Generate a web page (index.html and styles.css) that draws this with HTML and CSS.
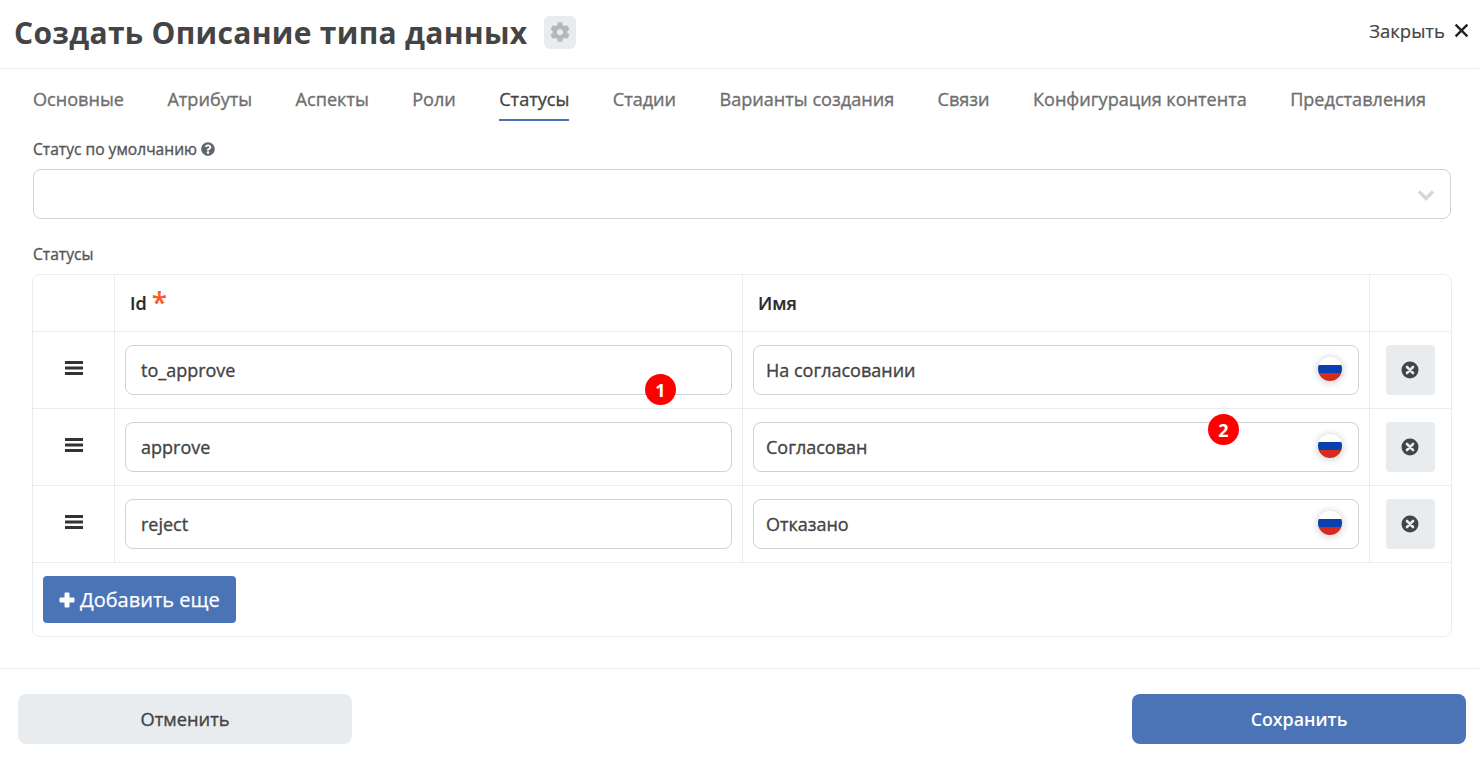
FILE: index.html
```html
<!DOCTYPE html>
<html lang="ru">
<head>
<meta charset="utf-8">
<title>Создать Описание типа данных</title>
<link rel="stylesheet" href="styles.css">
</head>
<body>
<div class="page">
  <header class="header">
    <div class="title-wrap">
      <h1 class="title">Создать Описание типа данных</h1>
      <span class="gear-btn">
        <svg class="gear" viewBox="0 0 512 512"><path fill="#b4b8ba" d="M487.4 315.7l-42.6-24.6c4.300-23.200 4.300-47 0-70.200l42.600-24.600c4.900-2.800 7.100-8.600 5.500-14-11.100-35.600-30-67.800-54.700-94.600-3.800-4.100-10-5.100-14.800-2.300L380.800 110c-17.900-15.400-38.500-27.300-60.800-35.100V25.800c0-5.600-3.900-10.500-9.400-11.700-36.700-8.200-74.300-7.800-109.200 0-5.500 1.200-9.400 6.100-9.400 11.700V75c-22.200 7.900-42.800 19.800-60.800 35.100L88.700 85.500c-4.900-2.800-11-1.900-14.800 2.300-24.700 26.700-43.600 58.900-54.700 94.600-1.700 5.400.6 11.200 5.500 14L67.300 221c-4.300 23.200-4.300 47 0 70.200l-42.600 24.600c-4.900 2.800-7.100 8.600-5.500 14 11.100 35.600 30 67.800 54.700 94.600 3.800 4.100 10 5.100 14.800 2.300l42.600-24.600c17.900 15.400 38.500 27.300 60.800 35.100v49.200c0 5.600 3.900 10.500 9.400 11.700 36.700 8.200 74.300 7.800 109.200 0 5.500-1.200 9.400-6.100 9.400-11.700v-49.200c22.200-7.900 42.800-19.800 60.800-35.100l42.600 24.600c4.900 2.800 11 1.900 14.800-2.300 24.700-26.700 43.600-58.900 54.700-94.600 1.500-5.500-.7-11.300-5.600-14.100zM256 336c-44.100 0-80-35.900-80-80s35.900-80 80-80 80 35.900 80 80-35.900 80-80 80z"/></svg>
      </span>
    </div>
    <div class="close">
      <span>Закрыть</span>
      <svg class="close-icon" viewBox="0 0 14 14"><path d="M1.500 1.500l11 11M12.500 1.500l-11 11" stroke="#222" stroke-width="2.200" fill="none"/></svg>
    </div>
  </header>

  <nav class="tabs">
    <span class="tab">Основные</span>
    <span class="tab">Атрибуты</span>
    <span class="tab">Аспекты</span>
    <span class="tab">Роли</span>
    <span class="tab tab-active">Статусы</span>
    <span class="tab">Стадии</span>
    <span class="tab">Варианты создания</span>
    <span class="tab">Связи</span>
    <span class="tab">Конфигурация контента</span>
    <span class="tab">Представления</span>
  </nav>

  <main class="content">
    <div class="label label-default">Статус по умолчанию
      <svg class="help" viewBox="0 0 512 512"><path fill="#5f666c" d="M504 256c0 137-111 248-248 248S8 393 8 256 119 8 256 8s248 111 248 248zM262.700 90c-54.500 0-89.300 23-116.500 63.800-3.500 5.300-2.400 12.400 2.700 16.300l34.700 26.300c5.200 3.900 12.600 3 16.700-2.100 17.900-22.700 30.200-35.800 57.300-35.800 20.400 0 45.700 13.100 45.700 33 0 15-12.400 22.700-32.600 34C247.100 238.500 216 254.900 216 296v4c0 6.600 5.400 12 12 12h56c6.600 0 12-5.400 12-12v-1.300c0-28.500 83.200-29.700 83.200-106.700 0-58-60.200-102-116.500-102zM256 338c-25.400 0-46 20.600-46 46s20.600 46 46 46 46-20.600 46-46-20.600-46-46-46z"/></svg>
    </div>
    <div class="select">
      <svg class="chevron" viewBox="0 0 18 12"><path d="M2 2.500l7 7 7-7" stroke="#d4d6d8" stroke-width="3.400" fill="none"/></svg>
    </div>

    <div class="label label-statuses">Статусы</div>
    <div class="table">
      <div class="row row-head">
        <div class="cell"></div>
        <div class="cell cell-head">Id <span class="req">*</span></div>
        <div class="cell cell-head">Имя</div>
        <div class="cell"></div>
      </div>

      <div class="row">
        <div class="cell cell-handle"><svg class="handle" viewBox="0 0 18 14"><path d="M0 0h18v3H0zM0 5.500h18v3H0zM0 11h18v3H0z" fill="#333"/></svg></div>
        <div class="cell cell-input"><div class="input input-id">to_approve</div></div>
        <div class="cell cell-input"><div class="input input-name">На согласовании<span class="flag"><span class="flag-w"></span><span class="flag-b"></span><span class="flag-r"></span></span></div></div>
        <div class="cell cell-del"><div class="del"><svg class="del-icon" viewBox="0 0 18 18"><circle cx="9" cy="9" r="8.500" fill="#444"/><path d="M6 6l6 6M12 6l-6 6" stroke="#e8ecee" stroke-width="2.600" stroke-linecap="round"/></svg></div></div>
      </div>

      <div class="row">
        <div class="cell cell-handle"><svg class="handle" viewBox="0 0 18 14"><path d="M0 0h18v3H0zM0 5.500h18v3H0zM0 11h18v3H0z" fill="#333"/></svg></div>
        <div class="cell cell-input"><div class="input input-id">approve</div></div>
        <div class="cell cell-input"><div class="input input-name">Согласован<span class="flag"><span class="flag-w"></span><span class="flag-b"></span><span class="flag-r"></span></span></div></div>
        <div class="cell cell-del"><div class="del"><svg class="del-icon" viewBox="0 0 18 18"><circle cx="9" cy="9" r="8.500" fill="#444"/><path d="M6 6l6 6M12 6l-6 6" stroke="#e8ecee" stroke-width="2.600" stroke-linecap="round"/></svg></div></div>
      </div>

      <div class="row">
        <div class="cell cell-handle"><svg class="handle" viewBox="0 0 18 14"><path d="M0 0h18v3H0zM0 5.500h18v3H0zM0 11h18v3H0z" fill="#333"/></svg></div>
        <div class="cell cell-input"><div class="input input-id">reject</div></div>
        <div class="cell cell-input"><div class="input input-name">Отказано<span class="flag"><span class="flag-w"></span><span class="flag-b"></span><span class="flag-r"></span></span></div></div>
        <div class="cell cell-del"><div class="del"><svg class="del-icon" viewBox="0 0 18 18"><circle cx="9" cy="9" r="8.500" fill="#444"/><path d="M6 6l6 6M12 6l-6 6" stroke="#e8ecee" stroke-width="2.600" stroke-linecap="round"/></svg></div></div>
      </div>

      <div class="table-foot">
        <div class="add-btn"><svg class="plus" viewBox="0 0 16 16"><path d="M6 1h4v5h5v4h-5v5H6v-5H1V6h5z" fill="#fff" stroke="#fff" stroke-linejoin="round"/></svg>Добавить еще</div>
      </div>
    </div>
  </main>

  <footer class="footer">
    <div class="btn btn-cancel">Отменить</div>
    <div class="btn btn-save">Сохранить</div>
  </footer>

  <span class="badge badge-one">1</span>
  <span class="badge badge-two">2</span>
</div>
</body>
</html>
```
FILE: styles.css
```css
* { box-sizing: border-box; }
html, body { margin: 0; padding: 0; background: #fff; }
body { font-family: "Open Sans", "Noto Sans", sans-serif; color: #444; overflow: hidden; }
.page { position: relative; width: 1479px; height: 777px; }

.header { height: 69px; border-bottom: 1px solid #e8edf0; display: flex; justify-content: space-between; align-items: flex-start; padding: 14px 10px 0 14px; }
.title-wrap { display: flex; align-items: center; gap: 17px; }
.title { margin: 0; font-size: 30px; line-height: 38px; font-weight: 700; color: #444; letter-spacing: 0.3px; }
.gear-btn { width: 32px; height: 33px; background: #e8ecee; border-radius: 6px; display: flex; align-items: center; justify-content: center; margin-top: -2px; }
.gear { width: 20px; height: 20px; display: block; }
.close { display: flex; align-items: center; gap: 9px; font-size: 18.500px; color: #444; height: 32px; -webkit-text-stroke: 0.2px #444; }
.close-icon { width: 15px; height: 15px; display: block; }

.tabs { display: flex; gap: 43.400px; padding: 0 33px; height: 52px; }
.tab { font-size: 18.100px; line-height: 23px; color: #6f6f6f; font-weight: 500; padding-top: 19px; height: 52px; -webkit-text-stroke: 0.35px #6f6f6f; }
.tab-active { color: #444; border-bottom: 2px solid #4b74b7; -webkit-text-stroke: 0.35px #444; }

.content { padding: 0 27px 0 33px; }
.label { font-size: 15.600px; line-height: 20px; font-weight: 500; color: #555; -webkit-text-stroke: 0.35px #555; }
.label-default { margin-top: 18px; height: 20px; display: flex; align-items: center; gap: 4px; }
.help { width: 14px; height: 14px; display: block; }
.select { margin-top: 10px; width: 1418px; height: 50px; border: 1px solid #ced1d3; border-radius: 8px; display: flex; align-items: center; justify-content: flex-end; padding-right: 15px; }
.chevron { width: 18px; height: 12px; display: block; margin-top: 1px; }
.label-statuses { margin-top: 25px; height: 20px; }

.table { margin: 10px 0 0 -1px; width: 1420px; height: 363px; border: 1px solid #e8edf0; border-radius: 8px; }
.row { display: grid; grid-template-columns: 82px 628px 627px 1fr; height: 77px; border-bottom: 1px solid #e8edf0; }
.row-head { height: 57px; }
.cell { border-right: 1px solid #e8edf0; display: flex; align-items: center; }
.cell:last-child { border-right: 0; }
.cell-head { padding-left: 15px; font-size: 18px; font-weight: 600; color: #2b2b2b; gap: 5px; -webkit-text-stroke: 0.2px #2b2b2b; }
.req { color: #ff5722; font-size: 28px; line-height: 26px; font-weight: 600; height: 26px; margin-top: -2px; -webkit-text-stroke: 0; }
.cell-handle { justify-content: center; padding-bottom: 4px; }
.handle { width: 18px; height: 14px; display: block; }
.cell-input { padding-left: 10px; }
.input { height: 50px; border: 1px solid #ced1d3; border-radius: 8px; display: flex; align-items: center; font-size: 18px; color: #444; font-weight: 500; -webkit-text-stroke: 0.35px #444; }
.input-id { width: 607px; padding-left: 15px; }
.input-name { width: 606px; padding: 0 16px 0 12px; justify-content: space-between; }
.flag { width: 24px; height: 24px; border-radius: 50%; overflow: hidden; display: flex; flex-direction: column; box-shadow: 0 1px 6px 2px rgba(0,0,0,.14); margin-top: -2px; }
.flag-w { height: 8px; background: #fff; }
.flag-b { height: 8px; background: #0a3fae; }
.flag-r { height: 8px; background: #d52b1e; }
.cell-del { padding-left: 16px; }
.del { width: 49px; height: 50px; background: #e8ecee; border-radius: 4px; display: flex; align-items: center; justify-content: center; padding: 0 1px 1px 0; }
.del-icon { width: 18px; height: 18px; display: block; }
.table-foot { padding: 13px 10px; }
.add-btn { width: 193px; height: 47px; background: #4b74b7; border-radius: 4px; color: #fff; font-size: 20px; display: flex; align-items: center; padding-left: 16px; gap: 5px; font-weight: 500; -webkit-text-stroke: 0.25px #fff; }
.plus { width: 16px; height: 16px; display: block; }

.footer { margin-top: 31px; border-top: 1px solid #e8edf0; padding: 25px 13px 0 18px; display: flex; justify-content: space-between; }
.btn { width: 334px; height: 50px; border-radius: 8px; display: flex; align-items: center; justify-content: center; font-size: 18px; }
.btn-cancel { background: #e8ecee; color: #444; font-weight: 500; font-size: 18.300px; padding-bottom: 2px; -webkit-text-stroke: 0.35px #444; }
.btn-save { background: #4b74b7; color: #fff; font-weight: 600; font-size: 17.800px; }

.badge { position: absolute; width: 31px; height: 31px; border-radius: 50%; background: #f00; color: #fff; font-size: 18px; font-weight: 700; display: flex; align-items: center; justify-content: center; }
.badge-one { left: 645px; top: 374px; }
.badge-two { left: 1208px; top: 414px; }
```
